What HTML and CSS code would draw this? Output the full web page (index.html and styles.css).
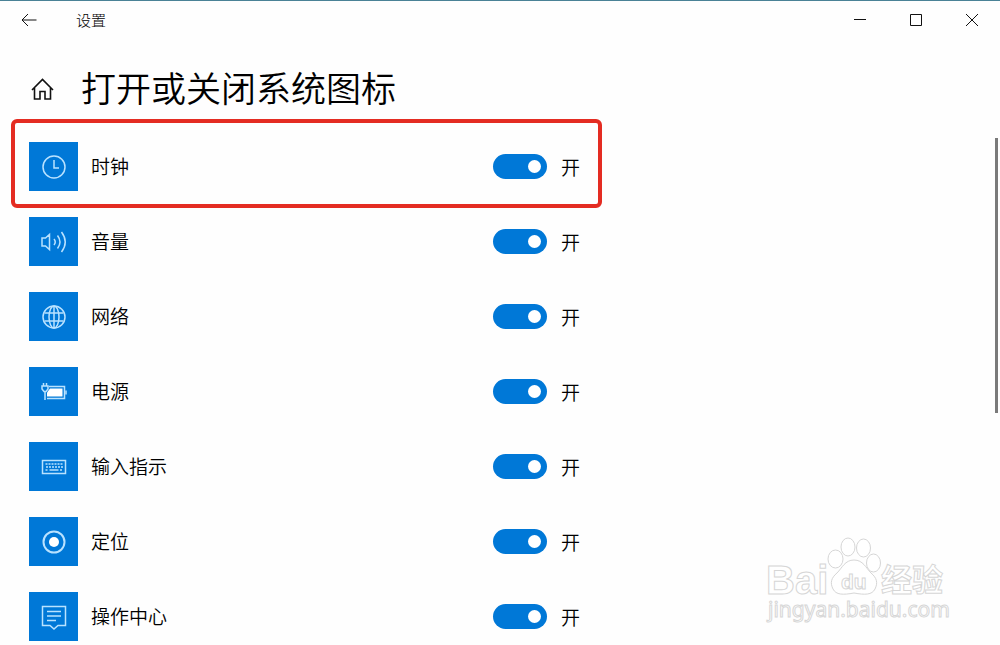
FILE: index.html
```html
<!DOCTYPE html>
<html lang="zh-CN">
<head>
    <meta charset="UTF-8">
    <meta name="viewport" content="width=device-width, initial-scale=1.0">
    <title>设置</title>
    <link rel="stylesheet" href="styles.css">
</head>
<body>
    <header class="titlebar">
        <button class="back" aria-label="返回">
            <svg width="16" height="14" viewBox="0 0 16 14"><path d="M15.5 7H1M7 1L1 7l6 6"/></svg>
        </button>
        <span class="app-name">设置</span>
        <div class="window-buttons">
            <button aria-label="最小化"><svg width="12" height="12" viewBox="0 0 12 12"><path d="M0 5.5h12"/></svg></button>
            <button aria-label="最大化"><svg width="12" height="12" viewBox="0 0 12 12"><path d="M.5.5h11v11H.5z"/></svg></button>
            <button aria-label="关闭"><svg width="12" height="12" viewBox="0 0 12 12"><path d="M0 0l12 12M12 0L0 12"/></svg></button>
        </div>
    </header>

    <main>
        <div class="page-head">
            <a class="home" href="#" aria-label="主页">
                <svg width="23" height="22" viewBox="0 0 23 22"><path d="M1 12L11.500 1.500 22 12M3.500 9.500V21H9v-7.500h5V21h5.500V9.500"/></svg>
            </a>
            <h1>打开或关闭系统图标</h1>
        </div>

        <ul class="icon-list">
            <li class="row marked">
                <span class="tile">
                    <svg viewBox="0 0 26 26"><circle cx="13" cy="13" r="11"/><path d="M13 6v8h5"/></svg>
                </span>
                <label for="clock">时钟</label>
                <input type="checkbox" id="clock" class="switch" checked>
                <span class="state">开</span>
            </li>
            <li class="row">
                <span class="tile">
                    <svg viewBox="0 0 26 26"><path d="M1 9v8h3.500l4 3.500v-15L4.500 9zM13 10q2.500 3 0 6M16.500 6.500q5 6.500 0 13M20.500 3q7.500 10 0 20"/></svg>
                </span>
                <label for="volume">音量</label>
                <input type="checkbox" id="volume" class="switch" checked>
                <span class="state">开</span>
            </li>
            <li class="row">
                <span class="tile">
                    <svg viewBox="0 0 26 26"><circle cx="13" cy="13" r="11"/><ellipse cx="13" cy="13" rx="5" ry="11"/><path d="M13 2v22M3.500 9h19M3.500 17h19"/></svg>
                </span>
                <label for="network">网络</label>
                <input type="checkbox" id="network" class="switch" checked>
                <span class="state">开</span>
            </li>
            <li class="row">
                <span class="tile">
                    <svg viewBox="0 0 26 26"><path d="M8 7.500h15.500v12H6"/><path class="solid" d="M9 9.500h12.500v8H6v-4z"/><path d="M25 11.500v4M4 12v9M2.500 4v3M5.500 4v3"/><path d="M1 7h6v3L5 12.500H3L1 10z"/></svg>
                </span>
                <label for="power">电源</label>
                <input type="checkbox" id="power" class="switch" checked>
                <span class="state">开</span>
            </li>
            <li class="row">
                <span class="tile">
                    <svg viewBox="0 0 26 26"><path d="M1.500 6.500h23v13h-23z"/><path class="keys" d="M4.500 10h18M5 13h17M4.500 16h3M19 16h3"/><path d="M8.500 16h9"/></svg>
                </span>
                <label for="input">输入指示</label>
                <input type="checkbox" id="input" class="switch" checked>
                <span class="state">开</span>
            </li>
            <li class="row">
                <span class="tile">
                    <svg viewBox="0 0 26 26"><circle class="ring" cx="13" cy="13" r="10.500"/><circle class="solid" cx="13" cy="13" r="5"/></svg>
                </span>
                <label for="location">定位</label>
                <input type="checkbox" id="location" class="switch" checked>
                <span class="state">开</span>
            </li>
            <li class="row">
                <span class="tile">
                    <svg viewBox="0 0 26 26"><path d="M1.500 2.500h23v19H17l-4 3.500-4-3.500H1.500zM6 7.500h14M6 12h14M6 16.500h9"/></svg>
                </span>
                <label for="action">操作中心</label>
                <input type="checkbox" id="action" class="switch" checked>
                <span class="state">开</span>
            </li>
        </ul>
    </main>

    <div class="scroll-thumb"></div>

    <div class="watermark">
        <svg width="200" height="96" viewBox="0 0 200 96">
            <g class="paw">
                <ellipse cx="85.500" cy="24" rx="7.500" ry="9"/>
                <ellipse cx="98" cy="12" rx="7" ry="9"/>
                <ellipse cx="113.500" cy="13" rx="7" ry="9"/>
                <ellipse cx="123.500" cy="28" rx="7" ry="9"/>
                <path d="M104 25c-9 0-12 8-17 13-6 5-7 10-4 16 3 6 10 6 21 4 11 2 18 2 21-4 3-6 2-11-4-16-5-5-8-13-17-13z"/>
            </g>
            <text class="mark-big" x="16" y="59">Bai</text>
            <text class="mark-du" x="91" y="54">du</text>
            <text class="mark-cn" x="131" y="56">经验</text>
            <text class="mark-url" x="18" y="82">jingyan.baidu.com</text>
        </svg>
    </div>
</body>
</html>
```

FILE: styles.css
```css
* {
    box-sizing: border-box;
}

body {
    margin: 0;
    min-height: 100vh;
    position: relative;
    overflow-x: hidden;
    border-top: 1px solid #4a8296;
    background-color: #fefefe;
    color: #000;
    font-family: "Noto Sans CJK SC", sans-serif;
}

button {
    display: flex;
    align-items: center;
    justify-content: center;
    padding: 0;
    border: none;
    background: none;
}

svg {
    fill: none;
    stroke: #111;
}

/* Title bar */
.titlebar {
    display: flex;
    align-items: center;
    height: 38px;
}

.back {
    width: 58px;
    height: 38px;
}

.app-name {
    margin-left: 18px;
    font-size: 15px;
    font-weight: 300;
    line-height: 20px;
}

.window-buttons {
    display: flex;
    margin-left: auto;
}

.window-buttons button {
    width: 56px;
    height: 38px;
}

/* Page heading */
.page-head {
    display: flex;
    align-items: center;
    gap: 27px;
    padding: 22px 31px 0;
}

.home {
    display: flex;
}

.home svg {
    stroke-width: 1.6;
}

h1 {
    margin: 0;
    padding-bottom: 4px;
    font-size: 35px;
    font-weight: 350;
    line-height: 52px;
}

/* Icon switches */
.icon-list {
    display: flex;
    flex-direction: column;
    gap: 26px;
    max-width: 580px;
    margin: 0;
    padding: 25px 0 4px 29px;
    list-style: none;
}

.row {
    display: flex;
    align-items: center;
    position: relative;
    font-size: 19px;
    font-weight: 350;
    line-height: 28px;
}

.marked::after {
    content: '';
    position: absolute;
    inset: -23px -22px -17px -18px;
    border: 4px solid #e42c22;
    border-radius: 6px;
    pointer-events: none;
}

.tile {
    display: flex;
    align-items: center;
    justify-content: center;
    width: 49px;
    height: 49px;
    background-color: #0078d7;
}

.tile svg {
    width: 26px;
    height: 26px;
    stroke: #b9e2ff;
    stroke-width: 1.5;
}

.tile .solid {
    fill: #fff;
    stroke: none;
}

.tile .ring {
    stroke-width: 2;
}

.tile .keys {
    stroke-dasharray: 2 1;
}

.row label {
    flex: 1;
    padding: 0 0 2px 13px;
}

.switch {
    appearance: none;
    display: flex;
    align-items: center;
    justify-content: flex-end;
    width: 54px;
    height: 25px;
    margin: 0 14px 0 0;
    padding-right: 6px;
    border-radius: 13px;
    background-color: #0078d7;
}

.switch::before {
    content: '';
    width: 13px;
    height: 13px;
    border-radius: 50%;
    background-color: #fff;
}

.switch:not(:checked) {
    justify-content: flex-start;
    padding-left: 6px;
    background-color: #999;
}

/* Scrollbar thumb over the right edge */
.scroll-thumb {
    position: absolute;
    top: 137px;
    right: 2px;
    width: 3px;
    height: 275px;
    background-color: #7a7a7a;
}

/* Watermark */
.watermark {
    position: absolute;
    right: 50px;
    bottom: 14px;
    pointer-events: none;
}

.watermark svg {
    display: block;
    overflow: visible;
    stroke: #d6d6d6;
    fill: #fff;
}

.mark-big {
    font: bold 40px "Liberation Sans", sans-serif;
}

.mark-du {
    font: bold 21px "Liberation Sans", sans-serif;
}

.mark-cn {
    font: bold 31px "Noto Sans CJK SC", sans-serif;
}

.mark-url {
    font: 21px "Noto Sans", sans-serif;
}
```
